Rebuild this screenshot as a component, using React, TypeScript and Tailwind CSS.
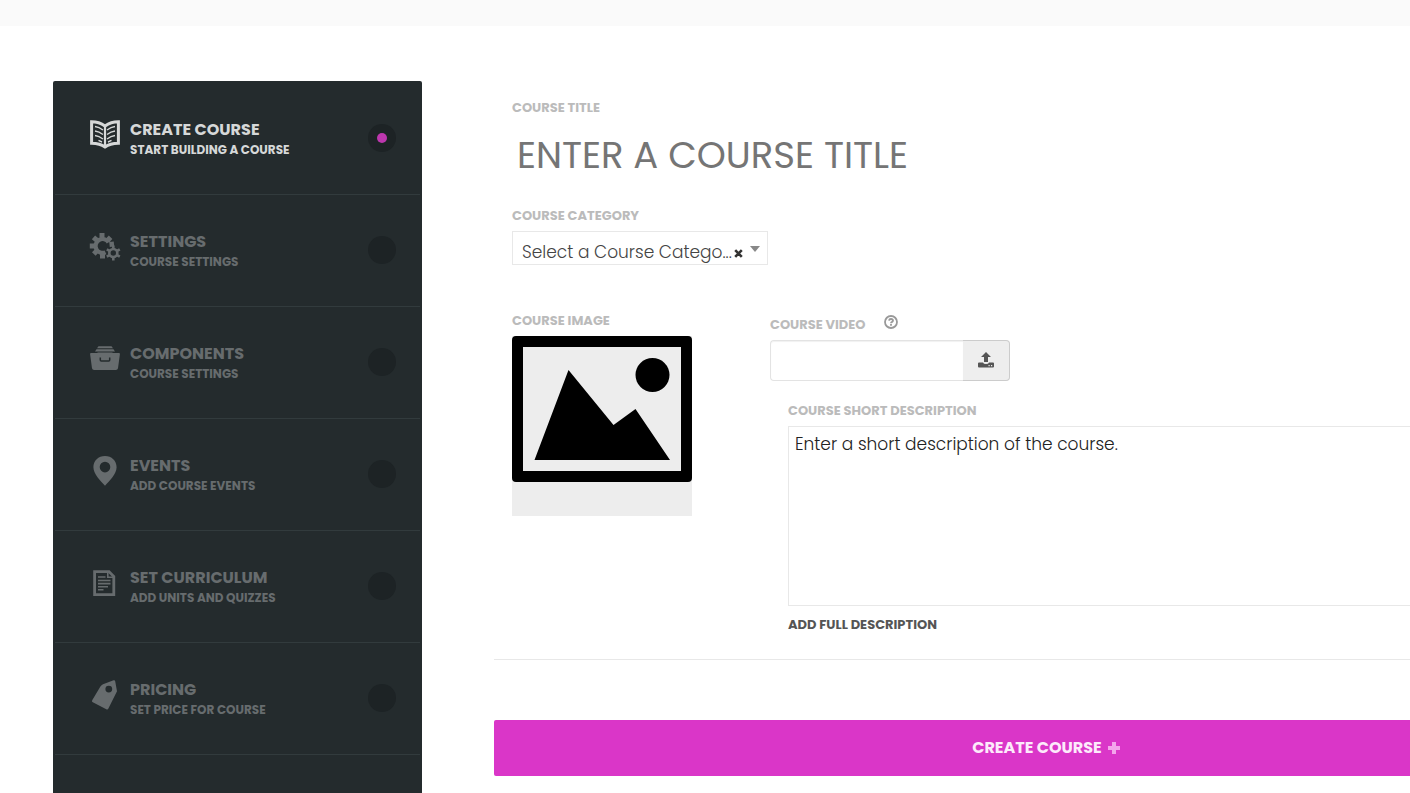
import React from "react";

const stroke = { fill: "none", stroke: "currentColor" } as const;

function BookIcon() {
  return (
    <svg viewBox="0 0 32 30" className="h-[30px] w-8" aria-hidden="true">
      <g {...stroke}>
        <path d="M2.6 1.8 Q10 1.8 16 6 Q22 1.8 29.4 1.8 V23.2 Q21 23.3 16 27 Q11 23.3 2.6 23.2 Z" strokeWidth="3" />
        <path d="M16 5.5 V26" strokeWidth="2.2" />
        <path
          d="M6 6.5 Q10 7 14 10 M6 11 Q10 11.5 14 14.5 M6 15.5 Q10 16 14 19 M9.5 20.4 L13 22 M26 6.5 Q22 7 18 10 M26 11 Q22 11.5 18 14.5 M26 15.5 Q22 16 18 19 M22.5 20.4 L19 22"
          strokeWidth="1.4"
        />
      </g>
    </svg>
  );
}

function GearsIcon() {
  return (
    <svg viewBox="0 0 32 30" className="h-[30px] w-8" aria-hidden="true">
      <g {...stroke}>
        <path d="M19.6 10.4 A7 7 0 1 0 16.5 20.3" strokeWidth="4.2" />
        <path d="M13 1 V5 M4.5 5.3 L8 8.4 M.8 14 H5 M4.8 22 L8 18.6 M13.5 21.5 V26.5 M21.6 5.2 L18.5 8.4 M20.5 12.5 L25 12" strokeWidth="5" />
        <circle cx="24.3" cy="21" r="4" strokeWidth="2.6" />
        <path d="M24.3 13.6 V17 M24.3 25 V28.4 M17.8 17.3 L21 19.2 M27.6 22.8 L30.8 24.7 M17.8 24.7 L21 22.8 M27.6 19.2 L30.8 17.3" strokeWidth="2.6" />
      </g>
    </svg>
  );
}

function BoxIcon() {
  return (
    <svg viewBox="0 0 32 30" className="h-[30px] w-8" fill="currentColor" aria-hidden="true">
      <path d="M9.5 2.2 H22.5 L24 4.2 H8 Z M7.5 5.2 H24.5 L26 7.4 H6 Z" />
      <path d="M2 9 H8 L9 8.4 H23 L24 9 H30 Q31 9 30.9 10.2 L29 24.2 Q28.7 26 26.9 26 H5.1 Q3.3 26 3 24.2 L1.1 10.2 Q1 9 2 9 Z" />
      <path d="M11.3 13.4 V16 Q11.3 17 12.3 17 H19.7 Q20.7 17 20.7 16 V13.4" fill="none" stroke="#242b2d" strokeWidth="1.5" />
    </svg>
  );
}

function PinIcon() {
  return (
    <svg viewBox="0 0 32 30" className="h-[30px] w-8" fill="currentColor" aria-hidden="true">
      <path
        fillRule="evenodd"
        d="M16 0 C22.6 0 27.6 4.8 27.6 11.2 C27.6 18.2 20.5 24.4 16 29.8 C11.5 24.4 4.4 18.2 4.4 11.2 C4.4 4.8 9.4 0 16 0 Z M16 5.8 A5.3 5.3 0 1 0 16 16.4 A5.3 5.3 0 1 0 16 5.8 Z"
      />
    </svg>
  );
}

function DocumentIcon() {
  return (
    <svg viewBox="0 0 32 30" className="h-[30px] w-8" aria-hidden="true">
      <g {...stroke}>
        <path d="M5.6 3.6 H20 L24.8 8.5 V26.6 H5.6 Z" strokeWidth="2.8" />
        <path d="M18.8 3.5 V9.2 H25" strokeWidth="1.6" />
        <path d="M9 9 H16.5 M9 12.5 H21.5 M9 15.6 H21.5 M9 18.7 H19 M9 21.8 H14.5" strokeWidth="1.6" />
      </g>
    </svg>
  );
}

function TagIcon() {
  return (
    <svg viewBox="0 0 32 30" className="h-[30px] w-8" fill="currentColor" aria-hidden="true">
      <path
        fillRule="evenodd"
        d="M14 4.2 L24.6 .3 Q26 0 26.2 1.2 L28 11.2 L19.4 28.5 Q18.7 29.9 17.3 29.2 L3.8 22.3 Q2.4 21.5 3.2 20.2 L11.4 6.6 Q12.4 4.8 14 4.2 Z M19.8 5.7 A3.4 3.4 0 1 0 19.8 12.5 A3.4 3.4 0 1 0 19.8 5.7 Z"
      />
    </svg>
  );
}

const steps = [
  { title: "CREATE COURSE", note: "START BUILDING A COURSE", Icon: BookIcon, active: true },
  { title: "SETTINGS", note: "COURSE SETTINGS", Icon: GearsIcon, active: false },
  { title: "COMPONENTS", note: "COURSE SETTINGS", Icon: BoxIcon, active: false },
  { title: "EVENTS", note: "ADD COURSE EVENTS", Icon: PinIcon, active: false },
  { title: "SET CURRICULUM", note: "ADD UNITS AND QUIZZES", Icon: DocumentIcon, active: false },
  { title: "PRICING", note: "SET PRICE FOR COURSE", Icon: TagIcon, active: false },
];

const labelClass = "block text-[13px] leading-5 font-bold text-[#bbbbbb]";

function Sidebar() {
  return (
    <nav aria-label="Course steps" className="w-[369px] shrink-0 rounded-t-xs bg-[#242b2d] px-0.5 pt-0.5">
      <ul>
        {steps.map(({ title, note, Icon, active }) => (
          <li key={title} className="border-b border-[#323b3d]">
            <a
              href="#"
              aria-current={active ? "step" : undefined}
              className={`flex h-[111px] items-start pt-[37px] pr-6 pl-[34px] ${active ? "text-[#d6d8d8]" : "text-[#676c6e]"}`}
            >
              <Icon />
              <span className="ml-[9px] flex-1 font-bold">
                <span className="block text-base leading-5">{title}</span>
                <span className="block text-xs leading-5">{note}</span>
              </span>
              <span className="mt-1 flex size-7 items-center justify-center rounded-full bg-[#1d2325]">
                {active && <span className="size-2.5 rounded-full bg-[#bd37ae]" />}
              </span>
            </a>
          </li>
        ))}
      </ul>
    </nav>
  );
}

function CourseImage() {
  return (
    <button type="button" aria-label="Choose course image" className="mt-[5px] block size-[180px] bg-[#ededed]">
      <svg viewBox="0 0 180 180" className="size-full" aria-hidden="true">
        <path fillRule="evenodd" d="M4 0 H176 Q180 0 180 4 V142 Q180 146 176 146 H4 Q0 146 0 142 V4 Q0 0 4 0 Z M11 11 V135 H169 V11 Z" />
        <path d="M22.5 124 L56.5 34 L101.5 89 L123.5 73 L158 124 Z" />
        <circle cx="140.5" cy="39" r="17" />
      </svg>
    </button>
  );
}

export default function App() {
  return (
    <div className="flex min-h-screen flex-col overflow-x-hidden bg-white font-['Poppins','Inter',sans-serif] text-[#444444]">
      <header className="h-[26px] bg-[#fafafa]" />
      <div className="flex flex-1 pt-[55px] pl-[53px]">
        <Sidebar />
        <main className="ml-[72px] min-w-0 flex-1 pt-[17px] pb-4">
          <form onSubmit={(e) => e.preventDefault()}>
            <div className="border-b border-[#e8e8e8] pb-6 pl-[18px]">
              <label htmlFor="title" className={labelClass}>COURSE TITLE</label>
              <input
                id="title"
                placeholder="ENTER A COURSE TITLE"
                className="mt-[7px] block h-[60px] w-full pl-[5px] text-[37px] outline-none placeholder:text-[#757575]"
              />

              <label htmlFor="category" className={`${labelClass} mt-[21px]`}>COURSE CATEGORY</label>
              <div className="relative mt-[5px] w-64">
                <select
                  id="category"
                  className="block h-[34px] w-full appearance-none border border-[#e8e8e8] bg-white pt-2 pl-[9px] text-[17px] leading-6 font-light text-[#444444] outline-none"
                >
                  <option>Select a Course Catego...</option>
                </select>
                <button type="button" aria-label="Clear category" className="absolute top-[18px] right-[25px]">
                  <svg viewBox="0 0 9 9" className="size-[9px]" aria-hidden="true">
                    <path d="M1.2 1.2 L7.8 7.8 M7.8 1.2 L1.2 7.8" stroke="#333333" strokeWidth="2.6" />
                  </svg>
                </button>
                <svg viewBox="0 0 10 6" className="pointer-events-none absolute top-[15px] right-2 h-1.5 w-2.5" aria-hidden="true">
                  <path d="M0 0 H10 L5 6 Z" fill="#888888" />
                </svg>
              </div>

              <div className="mt-[46px] flex">
                <div className="w-[258px] shrink-0">
                  <span className={labelClass}>COURSE IMAGE</span>
                  <CourseImage />
                </div>
                <div className="min-w-0 flex-1 pt-1">
                  <div className="flex items-start">
                    <label htmlFor="video" className={labelClass}>COURSE VIDEO</label>
                    <button type="button" aria-label="Help" className="ml-[18px] text-[#999999]">
                      <svg viewBox="0 0 14 14" className="size-3.5" aria-hidden="true">
                        <circle cx="7" cy="7" r="6" fill="none" stroke="currentColor" strokeWidth="1.8" />
                        <path d="M5 5.6 Q5.2 4 7 4 Q9 4 9 5.6 Q9 6.6 7.8 7.1 Q7 7.5 7 8.3" fill="none" stroke="currentColor" strokeWidth="1.8" />
                        <path d="M6.1 9.1 H7.9 V10.8 H6.1 Z" fill="currentColor" />
                      </svg>
                    </button>
                  </div>
                  <div className="mt-[5px] flex h-[41px] w-60">
                    <input
                      id="video"
                      className="min-w-0 flex-1 rounded-l border border-r-0 border-[#e3e3e3] px-3 shadow-[inset_0_1px_1px_rgba(0,0,0,0.06)] outline-none"
                    />
                    <button
                      type="button"
                      aria-label="Upload video"
                      className="flex w-[47px] items-center justify-center rounded-r border border-l-0 border-[#cccccc] bg-[#eeeeee] pb-0.5 text-[#555555]"
                    >
                      <svg viewBox="0 0 16 16" className="size-4" fill="currentColor" aria-hidden="true">
                        <path d="M8 0 L13 5 H10 V10 H6 V5 H3 Z" />
                        <path fillRule="evenodd" d="M1 10.5 H5 Q5.5 12 8 12 Q10.5 12 11 10.5 H15 Q16 10.5 16 11.5 V14.5 Q16 15.5 15 15.5 H1 Q0 15.5 0 14.5 V11.5 Q0 10.5 1 10.5 Z M10.5 13 V14.2 H11.7 V13 Z M13 13 V14.2 H14.2 V13 Z" />
                      </svg>
                    </button>
                  </div>
                  <div className="mt-5 pl-[18px]">
                    <label htmlFor="description" className={labelClass}>COURSE SHORT DESCRIPTION</label>
                    <textarea
                      id="description"
                      defaultValue="Enter a short description of the course."
                      className="mt-[5px] block h-[180px] w-full resize-none border border-r-0 border-[#e8e8e8] px-1.5 py-[3px] text-[17px] leading-7 font-light text-[#222222] outline-none"
                    />
                    <button type="button" className="mt-[9px] block text-[13px] leading-5 font-bold text-[#555555]">
                      ADD FULL DESCRIPTION
                    </button>
                  </div>
                </div>
              </div>
            </div>

            <button
              type="submit"
              className="mt-[60px] flex h-14 w-full items-center justify-center gap-1.5 rounded-l-xs bg-[#da36c8] pl-[188px] text-base font-bold text-[#fdeafb]"
            >
              CREATE COURSE
              <svg viewBox="0 0 12 12" className="size-3" aria-hidden="true">
                <path d="M4 0 H8 V4 H12 V8 H8 V12 H4 V8 H0 V4 H4 Z" fill="#f3a5eb" />
              </svg>
            </button>
          </form>
        </main>
      </div>
    </div>
  );
}
